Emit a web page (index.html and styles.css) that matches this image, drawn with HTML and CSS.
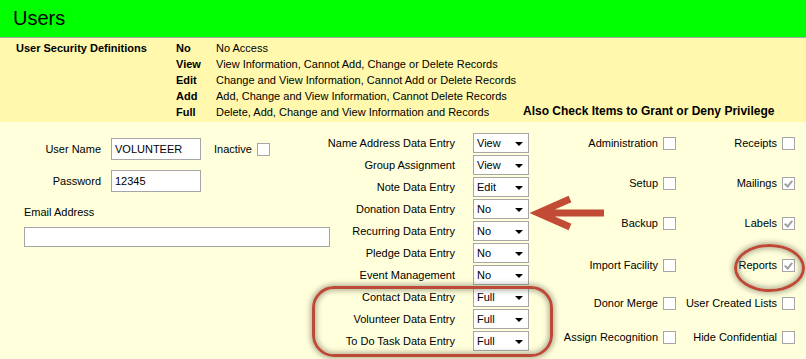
FILE: index.html
```html
<!DOCTYPE html>
<html lang="en">
<head>
  <meta charset="UTF-8">
  <title>Users</title>
  <link rel="stylesheet" href="styles.css">
</head>
<body>
<div class="titleBar">
    <h1>Users</h1>
</div>

<div class="definitions">
    <div class="defTitle">User Security Definitions</div>
    <div class="defList">
        <div class="defRow"><b>No</b><span>No Access</span></div>
        <div class="defRow"><b>View</b><span>View Information, Cannot Add, Change or Delete Records</span></div>
        <div class="defRow"><b>Edit</b><span>Change and View Information, Cannot Add or Delete Records</span></div>
        <div class="defRow"><b>Add</b><span>Add, Change and View Information, Cannot Delete Records</span></div>
        <div class="defRow"><b>Full</b><span>Delete, Add, Change and View Information and Records</span></div>
    </div>
    <div class="defNote">Also Check Items to Grant or Deny Privilege</div>
</div>

<div class="main">
    <div class="userPanel">
        <div class="userRow">
            <label class="userLabel">User Name</label>
            <div class="textBox">VOLUNTEER</div>
            <label class="inactive">Inactive <span class="check"></span></label>
        </div>
        <div class="userRow">
            <label class="userLabel">Password</label>
            <div class="textBox">12345</div>
        </div>
        <label class="emailLabel">Email Address</label>
        <div class="textBox emailBox"></div>
    </div>

    <div class="accessPanel">
        <div class="accessRow"><label>Name Address Data Entry</label><div class="combo">View</div></div>
        <div class="accessRow"><label>Group Assignment</label><div class="combo">View</div></div>
        <div class="accessRow"><label>Note Data Entry</label><div class="combo">Edit</div></div>
        <div class="accessRow"><label>Donation Data Entry</label><div class="combo">No</div></div>
        <div class="accessRow"><label>Recurring Data Entry</label><div class="combo">No</div></div>
        <div class="accessRow"><label>Pledge Data Entry</label><div class="combo">No</div></div>
        <div class="accessRow"><label>Event Management</label><div class="combo">No</div></div>
        <div class="accessRow"><label>Contact Data Entry</label><div class="combo">Full</div></div>
        <div class="accessRow"><label>Volunteer Data Entry</label><div class="combo">Full</div></div>
        <div class="accessRow"><label>To Do Task Data Entry</label><div class="combo">Full</div></div>
    </div>

    <div class="privPanel">
        <label class="priv">Administration <span class="check"></span></label>
        <label class="priv">Receipts <span class="check"></span></label>
        <label class="priv">Setup <span class="check"></span></label>
        <label class="priv">Mailings <span class="check checked"></span></label>
        <label class="priv">Backup <span class="check"></span></label>
        <label class="priv">Labels <span class="check checked"></span></label>
        <label class="priv">Import Facility <span class="check"></span></label>
        <label class="priv">Reports <span class="check checked"></span></label>
        <label class="priv">Donor Merge <span class="check"></span></label>
        <label class="priv">User Created Lists <span class="check"></span></label>
        <label class="priv">Assign Recognition <span class="check"></span></label>
        <label class="priv">Hide Confidential <span class="check"></span></label>
    </div>

    <!-- annotations drawn over the form -->
    <svg class="arrow" width="80" height="40" viewBox="0 0 80 40">
        <path d="M74 19 L12 19 M40 5 L8 19 L40 33" fill="none" stroke="#c14b35" stroke-width="7" stroke-linejoin="miter"/>
    </svg>
    <div class="ring ringEntries"></div>
    <div class="ring ringReports"></div>
</div>
</body>
</html>
```

FILE: styles.css
```css
body {
    margin: 0;
    padding: 0;
    width: 806px;
    height: 359px;
    overflow: hidden;
    font-family: 'Liberation Sans', Arial, sans-serif;
    font-size: 11px;
    color: #000;
    background-color: #ffffdc;
    white-space: nowrap;
}
.titleBar {
    background-color: #00ff00;
    height: 38px;
    border-bottom: 1px solid #a8a8a8;
    box-sizing: border-box;
    display: flex;
    align-items: center;
    padding-left: 13px;
}
h1 {
    margin: 0;
    font-size: 20px;
    font-weight: 400;
}
.definitions {
    background-color: #fff8ad;
    height: 84px;
    display: flex;
    align-items: flex-start;
    padding-top: 2px;
    box-sizing: border-box;
}
.defTitle {
    font-weight: 700;
    width: 160px;
    padding-left: 16px;
    line-height: 16px;
}
.defList {
    width: 347px;
}
.defRow {
    display: flex;
    line-height: 16px;
}
.defRow b {
    width: 40px;
    flex-shrink: 0;
}
.defNote {
    font-weight: 700;
    font-size: 12px;
    align-self: flex-end;
    line-height: 16px;
    margin-bottom: 3px;
}

.main {
    position: relative;
    display: flex;
    height: 237px;
}
.userPanel {
    width: 335px;
    flex-shrink: 0;
    padding-top: 16px;
    box-sizing: border-box;
}
.userRow {
    display: flex;
    align-items: center;
    margin-bottom: 10px;
}
.userLabel {
    width: 101px;
    text-align: right;
    margin-right: 10px;
}
.textBox {
    background: #fff;
    border: 1px solid #a6a6a6;
    height: 22px;
    line-height: 20px;
    padding-left: 3px;
    box-sizing: border-box;
    width: 90px;
}
.inactive {
    display: flex;
    align-items: center;
    margin-left: 13px;
}
.inactive .check {
    margin-left: 5px;
}
.emailLabel {
    display: block;
    margin: 14px 0 0 24px;
}
.emailBox {
    width: 306px;
    height: 20px;
    margin: 9px 0 0 24px;
}

.accessPanel {
    width: 194px;
    flex-shrink: 0;
    padding-top: 10px;
}
.accessRow {
    display: flex;
    align-items: center;
    justify-content: flex-end;
    height: 22px;
}
.accessRow label {
    margin-right: 18px;
}
.combo {
    position: relative;
    flex-shrink: 0;
    width: 56px;
    height: 20px;
    line-height: 19px;
    background: #fff;
    border: 1px solid #a6a6a6;
    padding-left: 3px;
    box-sizing: border-box;
}
.combo::after {
    content: "";
    position: absolute;
    right: 5px;
    top: 8px;
    border-left: 4px solid transparent;
    border-right: 4px solid transparent;
    border-top: 4px solid #000;
}

.privPanel {
    display: grid;
    grid-template-columns: 147px 119px;
    grid-template-rows: 40px 40px 42px 38px 34px 30px;
    padding-top: 15px;
}
.priv {
    display: flex;
    justify-content: flex-end;
    align-items: flex-start;
}
.priv .check {
    margin-left: 5px;
}
.check {
    display: inline-block;
    width: 13px;
    height: 13px;
    background: #fff;
    border: 1px solid #a6a6a6;
    box-sizing: border-box;
    position: relative;
}
.check.checked::after {
    content: "";
    position: absolute;
    left: 3px;
    top: 1px;
    width: 3px;
    height: 6px;
    border-right: 2px solid #a0a0a0;
    border-bottom: 2px solid #a0a0a0;
    transform: rotate(40deg);
}

.arrow {
    position: absolute;
    left: 530px;
    top: 72px;
}
.ring {
    position: absolute;
    border: 3px solid #bd4a37;
    box-shadow: 0 0 5px 2px rgba(100, 100, 80, 0.45), inset 0 0 5px 2px rgba(100, 100, 80, 0.45);
}
.ringEntries {
    left: 312px;
    top: 164px;
    width: 235px;
    height: 65px;
    border-radius: 22px;
}
.ringReports {
    left: 734px;
    top: 122px;
    width: 65px;
    height: 42px;
    border-radius: 50%;
}
```
